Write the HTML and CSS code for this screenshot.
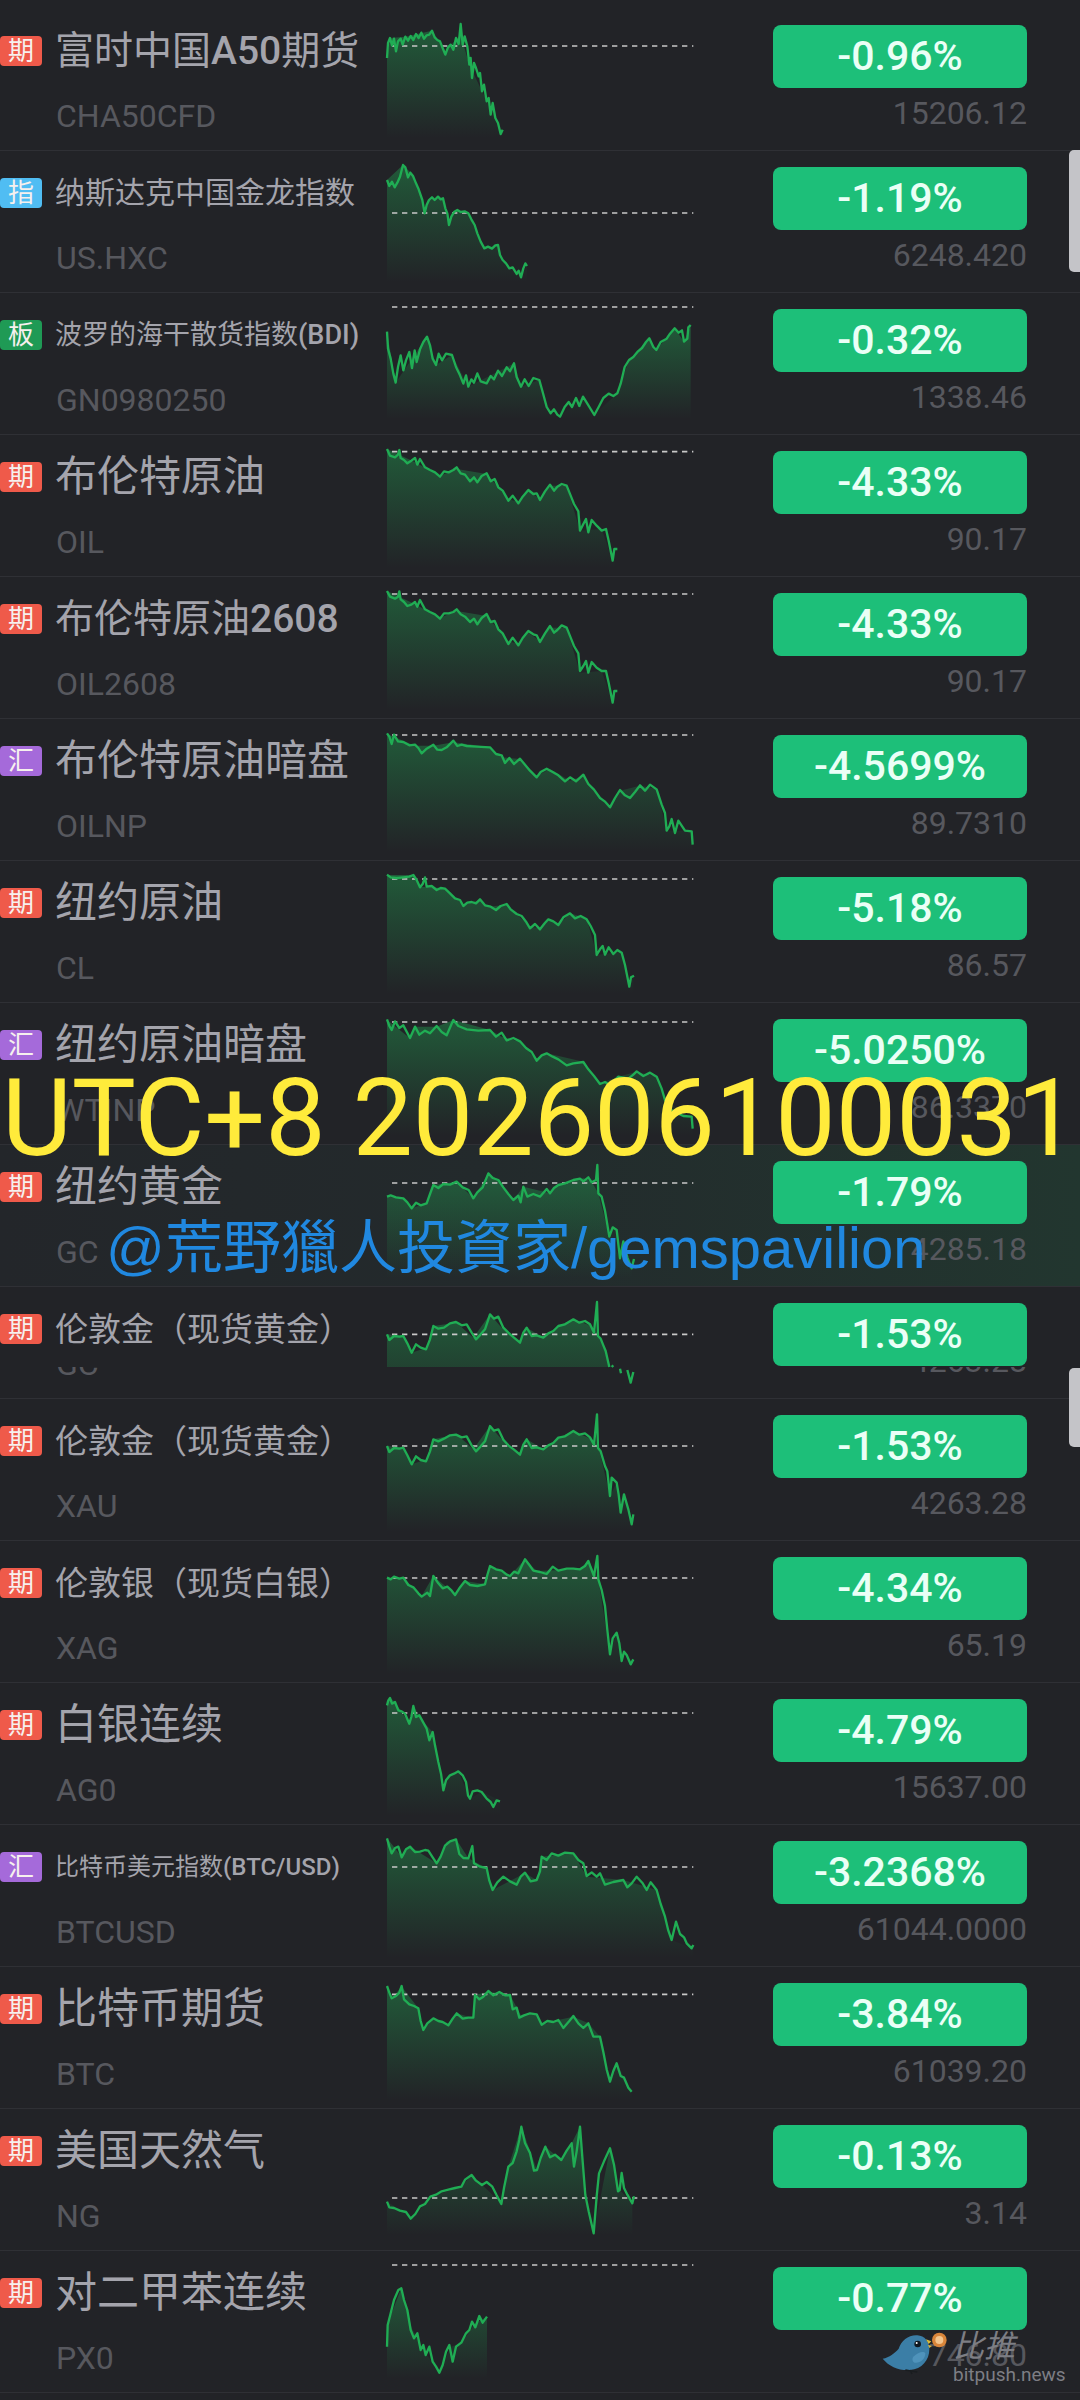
FILE: index.html
```html
<!DOCTYPE html>
<html lang="zh-CN">

<head>
    <meta charset="UTF-8">
    <meta name="viewport" content="width=device-width, initial-scale=1.0">
    <title>行情列表</title>
    <link rel="stylesheet" href="styles.css">
</head>

<body>
    <svg class="defs" aria-hidden="true">
        <defs>
            <linearGradient id="fade" x1="0" y1="0" x2="0" y2="1">
                <stop offset="0" stop-color="#20a552" stop-opacity="0.42" />
                <stop offset="1" stop-color="#20a552" stop-opacity="0" />
            </linearGradient>
            <linearGradient id="cutfade" x1="0" y1="0" x2="0" y2="1">
                <stop offset="0" stop-color="#20a552" stop-opacity="0.42" />
                <stop offset="1" stop-color="#20a552" stop-opacity="0.24" />
            </linearGradient>
        </defs>
    </svg>

    <div class="list">
        <div class="row">
            <div class="info">
                <div class="head"><span class="tag tag-red">期</span><span class="name name-l">富时中国<b>A50</b>期货</span></div>
                <div class="sym">CHA50CFD</div>
            </div>
            <svg class="chart" viewBox="51 0 930 426">
                <polygon fill="url(#fade)" points="51,150 60,90 106,86 186,68 226,130 272,80 298,170 336,250 398,370 398,390 51,390" />
                <line class="base" x1="66" y1="114" x2="970" y2="114" />
                <polyline class="spark" points="51,150 54,105 60,90 66,112 72,92 78,130 84,100 92,92 98,110 106,86 114,98 122,84 130,96 138,78 146,90 154,74 162,92 170,82 178,80 186,68 194,88 202,96 210,100 218,120 226,140 234,118 242,110 250,125 258,90 266,108 272,48 278,110 284,85 292,115 298,170 302,150 306,210 312,165 318,180 326,205 330,195 336,250 342,230 350,280 356,270 362,320 368,285 376,330 384,345 392,378 398,365" />
            </svg>
            <div class="quote">
                <div class="pct">-0.96%</div>
                <div class="price">15206.12</div>
            </div>
        </div>

        <div class="row">
            <div class="info">
                <div class="head"><span class="tag tag-blue">指</span><span class="name name-s">纳斯达克中国金龙指数</span></div>
                <div class="sym">US.HXC</div>
            </div>
            <svg class="chart" viewBox="51 0 930 426">
                <polygon fill="url(#fade)" points="51,90 99,45 129,75 157,150 164,190 177,150 219,145 237,225 253,185 295,190 322,250 343,295 384,285 398,330 453,380 471,345 471,395 51,395" />
                <line class="base" x1="66" y1="189" x2="970" y2="189" />
                <polyline class="spark" points="51,90 58,108 66,95 74,112 82,98 90,80 99,45 106,52 114,82 121,68 129,78 138,100 146,118 157,150 164,190 170,165 177,150 186,142 194,150 204,140 212,148 219,145 226,175 232,190 237,225 244,200 253,185 262,180 272,186 284,184 295,190 304,208 314,225 322,250 332,275 343,295 354,290 366,296 376,286 384,285 390,315 398,330 408,340 418,355 428,352 440,372 446,362 453,382 460,355 466,340 471,348" />
            </svg>
            <div class="quote">
                <div class="pct">-1.19%</div>
                <div class="price">6248.420</div>
            </div>
        </div>

        <div class="row">
            <div class="info">
                <div class="head"><span class="tag tag-green">板</span><span class="name name-xs">波罗的海干散货指数<b>(BDI)</b></span></div>
                <div class="sym">GN0980250</div>
            </div>
            <svg class="chart" viewBox="51 0 930 426">
                <polygon fill="url(#fade)" points="51,119 77,272 171,134 198,219 246,189 295,284 432,214 453,284 508,264 542,364 570,374 639,314 673,369 742,304 777,204 838,139 859,174 914,109 942,149 962,99 962,380 51,380" />
                <line class="base" x1="66" y1="45" x2="970" y2="45" />
                <polyline class="spark" points="51,119 54,170 62,200 70,245 77,272 84,225 92,190 100,235 108,205 118,180 126,228 134,175 140,210 150,172 160,150 171,134 180,160 188,200 198,219 206,185 216,205 228,185 246,189 258,225 270,250 280,275 288,250 295,284 304,262 312,272 322,244 332,268 350,274 362,252 372,262 384,236 396,252 410,226 420,238 432,214 440,255 453,284 464,262 476,282 490,258 508,264 518,300 530,345 542,364 552,352 562,368 570,374 584,345 596,330 606,345 618,318 628,342 639,314 652,335 673,369 686,345 700,318 716,305 730,312 742,304 752,275 764,225 777,204 790,195 804,178 816,168 828,150 838,139 850,165 859,174 872,150 890,140 900,125 914,109 926,122 936,115 942,149 952,140 955,106 962,99" />
            </svg>
            <div class="quote">
                <div class="pct">-0.32%</div>
                <div class="price">1338.46</div>
            </div>
        </div>

        <div class="row">
            <div class="info">
                <div class="head"><span class="tag tag-red">期</span><span class="name">布伦特原油</span></div>
                <div class="sym">OIL</div>
            </div>
            <svg class="chart" viewBox="51 0 930 426">
                <polygon fill="url(#fade)" points="51,45 135,85 210,125 260,105 350,120 415,195 445,205 475,170 510,195 540,155 590,155 630,290 695,285 728,380 735,345 735,400 51,400" />
                <line class="base" x1="66" y1="53" x2="970" y2="53" />
                <polyline class="spark" points="51,45 60,65 75,70 84,62 88,48 92,72 102,78 112,88 124,80 135,72 142,92 150,75 165,100 180,108 195,115 210,128 222,112 236,115 250,108 260,100 272,118 285,122 300,142 312,130 322,145 335,126 350,118 362,142 374,135 385,160 398,170 415,200 428,185 445,208 458,188 475,168 490,180 500,178 510,198 525,172 540,152 552,170 562,158 575,150 590,155 602,185 612,210 625,232 630,290 640,270 648,255 655,295 665,258 680,275 695,290 708,285 716,320 728,380 733,345 742,345" />
            </svg>
            <div class="quote">
                <div class="pct">-4.33%</div>
                <div class="price">90.17</div>
            </div>
        </div>

        <div class="row">
            <div class="info">
                <div class="head"><span class="tag tag-red">期</span><span class="name name-l">布伦特原油<b>2608</b></span></div>
                <div class="sym">OIL2608</div>
            </div>
            <svg class="chart" viewBox="51 0 930 426">
                <polygon fill="url(#fade)" points="51,45 135,85 210,125 260,105 350,120 415,195 445,205 475,170 510,195 540,155 590,155 630,290 695,285 728,380 735,345 735,400 51,400" />
                <line class="base" x1="66" y1="54" x2="970" y2="54" />
                <polyline class="spark" points="51,45 60,62 75,68 84,62 88,46 92,70 102,78 112,90 124,86 135,78 142,92 150,72 165,100 180,108 195,115 210,128 222,112 236,112 250,108 260,100 272,115 285,122 300,138 312,128 322,145 335,126 350,114 362,138 374,135 385,160 398,172 415,204 428,185 445,208 458,186 475,165 490,175 500,178 510,198 525,172 540,150 552,170 562,162 575,148 590,155 602,185 612,210 625,232 630,285 640,270 648,255 655,290 665,258 680,275 695,285 708,285 716,320 728,380 733,345 742,345" />
            </svg>
            <div class="quote">
                <div class="pct">-4.33%</div>
                <div class="price">90.17</div>
            </div>
        </div>

        <div class="row">
            <div class="info">
                <div class="head"><span class="tag tag-purple">汇</span><span class="name">布伦特原油暗盘</span></div>
                <div class="sym">OILNP</div>
            </div>
            <svg class="chart" viewBox="51 0 930 426">
                <polygon fill="url(#fade)" points="51,48 135,83 190,83 250,73 360,88 395,118 450,123 500,173 540,153 600,188 640,173 690,238 720,263 750,218 810,203 860,213 890,338 968,340 968,400 51,400" />
                <line class="base" x1="66" y1="51" x2="970" y2="51" />
                <polyline class="spark" points="51,46 58,56 65,78 72,50 84,70 100,72 118,82 135,80 145,90 155,106 170,92 190,80 202,95 215,96 230,88 250,68 262,84 275,80 290,84 320,86 360,88 378,108 395,112 405,135 418,120 432,138 450,122 465,140 480,158 500,178 512,162 530,152 548,162 565,172 585,190 600,178 618,190 640,170 655,198 672,215 690,240 704,250 720,268 735,240 750,216 765,232 780,240 795,222 810,202 825,218 840,200 860,214 875,260 885,285 890,338 898,325 905,303 915,345 925,308 945,338 965,340 968,380" />
            </svg>
            <div class="quote">
                <div class="pct">-4.5699%</div>
                <div class="price">89.7310</div>
            </div>
        </div>

        <div class="row">
            <div class="info">
                <div class="head"><span class="tag tag-red">期</span><span class="name">纽约原油</span></div>
                <div class="sym">CL</div>
            </div>
            <svg class="chart" viewBox="51 0 930 426">
                <polygon fill="url(#fade)" points="51,45 130,45 150,80 225,85 280,135 330,120 350,140 410,135 480,200 510,205 535,180 565,195 600,160 650,175 680,285 755,275 778,380 790,345 790,400 51,400" />
                <line class="base" x1="66" y1="57" x2="970" y2="57" />
                <polyline class="spark" points="51,44 62,52 80,54 100,52 118,50 130,45 140,60 150,82 158,72 165,52 170,80 185,78 200,90 212,84 225,86 240,100 255,115 270,120 280,138 292,128 305,126 318,130 330,118 345,136 362,140 378,150 392,138 410,132 422,148 440,162 455,168 468,185 480,205 495,192 510,208 524,190 535,178 550,184 565,195 580,172 600,160 615,175 632,168 650,178 662,198 675,225 680,285 690,268 698,258 705,284 716,262 730,282 742,270 755,278 765,315 778,380 783,352 792,347" />
            </svg>
            <div class="quote">
                <div class="pct">-5.18%</div>
                <div class="price">86.57</div>
            </div>
        </div>

        <div class="row">
            <div class="info">
                <div class="head"><span class="tag tag-purple">汇</span><span class="name">纽约原油暗盘</span></div>
                <div class="sym">WTINP</div>
            </div>
            <svg class="chart" viewBox="51 0 930 426">
                <polygon fill="url(#fade)" points="51,54 120,109 135,74 200,74 250,54 360,84 395,104 450,119 500,174 530,154 640,179 690,244 745,224 800,209 860,224 885,294 968,350 968,400 51,400" />
                <line class="base" x1="66" y1="60" x2="970" y2="60" />
                <polyline class="spark" points="51,52 58,72 65,84 75,58 88,78 100,70 120,108 135,74 148,98 165,86 180,94 200,72 215,90 230,100 250,54 265,72 290,82 325,86 360,84 378,104 395,92 410,115 430,108 450,118 468,138 485,150 500,176 515,160 530,154 548,164 565,172 590,190 610,184 640,180 655,202 672,222 690,246 705,240 720,250 745,224 775,230 790,218 800,208 820,222 840,212 860,224 875,260 885,294 905,325 940,342 965,344 968,380" />
            </svg>
            <div class="quote">
                <div class="pct">-5.0250%</div>
                <div class="price">86.3370</div>
            </div>
        </div>

        <div class="row row-tint">
            <div class="info">
                <div class="head"><span class="tag tag-red">期</span><span class="name">纽约黄金</span></div>
                <div class="sym">GC</div>
            </div>
            <svg class="chart" viewBox="51 0 930 426">
                <polygon fill="url(#fade)" points="51,158 100,163 125,193 170,178 190,123 260,113 310,163 355,88 385,108 430,168 460,128 540,148 565,123 640,103 665,113 685,148 718,278 750,343 785,373 785,400 51,400" />
                <line class="base" x1="66" y1="117" x2="970" y2="117" />
                <polyline class="spark" points="51,158 62,154 78,160 100,163 112,175 125,193 138,176 152,184 170,178 180,150 190,123 205,132 220,120 240,122 260,113 278,130 296,138 310,163 322,145 338,130 355,88 368,102 385,108 400,130 415,150 430,168 445,155 452,175 460,128 472,158 490,150 510,158 530,135 540,148 552,132 565,123 585,118 610,108 630,104 640,112 655,100 665,115 678,108 682,63 685,148 695,158 705,200 718,278 728,250 740,258 750,343 760,292 772,340 785,373 792,345" />
            </svg>
            <div class="quote">
                <div class="pct">-1.79%</div>
                <div class="price">4285.18</div>
            </div>
        </div>

        <div class="row row-cut">
            <div class="info">
                <div class="head"><span class="tag tag-red">期</span><span class="name name-m">伦敦金（现货黄金）</span></div>
                <div class="sym sym-cut"><div class="sym-inner">GC</div></div>
            </div>
            <svg class="chart" viewBox="51 0 930 336">
                <polygon fill="url(#cutfade)" points="51,145 100,150 125,200 170,185 190,120 260,110 310,155 360,85 395,125 450,170 470,125 520,155 565,120 610,100 665,120 685,145 705,195 716,243 51,243" />
                <line class="base" x1="66" y1="145" x2="970" y2="145" />
                <polyline class="spark" points="51,145 58,162 72,150 88,152 100,150 112,172 125,200 138,175 152,185 168,190 180,160 190,120 205,128 222,125 240,112 258,108 275,118 290,115 305,140 318,160 332,145 345,130 360,85 372,98 385,92 400,125 415,140 432,155 450,170 460,140 470,125 485,150 500,148 520,155 535,142 550,135 565,120 585,115 610,100 628,110 645,105 660,115 672,140 681,48 684,150 692,158 700,178 707,195 718,243" />
                <polyline class="spark" points="725,243 730,238" />
                <polyline class="spark" points="750,248 753,262" />
                <polyline class="spark" points="772,252 782,290 790,258" />
            </svg>
            <div class="quote">
                <div class="pct">-1.53%</div>
                <div class="price price-cut"><div class="price-inner">4263.28</div></div>
            </div>
        </div>

        <div class="row">
            <div class="info">
                <div class="head"><span class="tag tag-red">期</span><span class="name name-m">伦敦金（现货黄金）</span></div>
                <div class="sym">XAU</div>
            </div>
            <svg class="chart" viewBox="51 0 930 426">
                <polygon fill="url(#fade)" points="51,144 100,149 125,199 170,184 190,124 260,109 310,154 360,84 395,124 450,169 470,124 520,154 565,119 610,99 665,124 685,144 720,294 740,254 752,344 762,289 785,379 790,349 790,400 51,400" />
                <line class="base" x1="66" y1="144" x2="970" y2="144" />
                <polyline class="spark" points="51,144 58,162 72,150 88,152 100,149 112,172 125,199 138,175 152,186 168,190 180,160 190,124 205,130 222,122 240,112 258,110 275,118 290,115 305,142 318,160 332,145 345,130 360,84 372,98 385,94 400,125 415,142 432,155 450,170 460,140 470,124 485,150 500,148 520,154 535,142 550,135 565,119 585,115 610,99 628,110 645,106 660,118 672,140 681,49 684,150 692,160 705,204 712,220 720,294 725,239 740,254 746,290 752,344 762,289 775,334 785,379 790,349" />
            </svg>
            <div class="quote">
                <div class="pct">-1.53%</div>
                <div class="price">4263.28</div>
            </div>
        </div>

        <div class="row">
            <div class="info">
                <div class="head"><span class="tag tag-red">期</span><span class="name name-m">伦敦银（现货白银）</span></div>
                <div class="sym">XAG</div>
            </div>
            <svg class="chart" viewBox="51 0 930 426">
                <polygon fill="url(#fade)" points="51,113 100,113 155,168 190,108 255,163 285,123 345,133 360,78 420,108 465,58 500,93 630,88 655,63 685,118 720,343 740,278 755,363 790,358 790,400 51,400" />
                <line class="base" x1="66" y1="114" x2="970" y2="114" />
                <polyline class="spark" points="51,113 62,118 72,110 88,116 100,113 115,135 130,142 145,160 155,170 172,158 180,168 190,108 205,130 218,145 232,140 245,152 255,165 268,145 285,123 300,135 322,138 345,133 352,105 360,78 378,88 395,92 410,104 420,108 432,95 445,100 455,78 465,58 478,75 490,92 510,96 530,102 548,80 565,92 590,86 610,86 630,88 645,78 655,63 665,90 672,108 682,48 685,118 695,150 705,198 712,270 720,343 728,295 740,278 748,310 755,363 762,335 770,345 782,373 790,358" />
            </svg>
            <div class="quote">
                <div class="pct">-4.34%</div>
                <div class="price">65.19</div>
            </div>
        </div>

        <div class="row">
            <div class="info">
                <div class="head"><span class="tag tag-red">期</span><span class="name">白银连续</span></div>
                <div class="sym">AG0</div>
            </div>
            <svg class="chart" viewBox="51 0 930 426">
                <polygon fill="url(#fade)" points="51,70 60,48 75,60 118,125 130,72 160,120 188,150 220,325 240,280 265,268 300,350 335,330 390,355 390,400 51,400" />
                <line class="base" x1="66" y1="93" x2="970" y2="93" />
                <polyline class="spark" points="51,70 55,55 60,48 66,65 75,60 85,85 95,88 105,95 118,125 124,105 130,72 138,105 148,100 160,122 170,140 178,175 188,150 195,190 205,240 213,275 220,325 228,295 240,280 252,275 265,268 278,280 288,300 294,340 300,350 308,328 322,325 335,330 350,350 362,360 370,375 380,355 390,358" />
            </svg>
            <div class="quote">
                <div class="pct">-4.79%</div>
                <div class="price">15637.00</div>
            </div>
        </div>

        <div class="row">
            <div class="info">
                <div class="head"><span class="tag tag-purple">汇</span><span class="name name-xxs">比特币美元指数<b>(BTC/USD)</b></span></div>
                <div class="sym">BTCUSD</div>
            </div>
            <svg class="chart" viewBox="51 0 930 426">
                <polygon fill="url(#fade)" points="51,43 95,98 120,68 200,118 230,53 260,48 295,103 350,133 368,198 465,148 500,168 515,98 610,88 650,158 760,168 860,198 905,348 965,373 970,363 970,400 51,400" />
                <line class="base" x1="66" y1="129" x2="970" y2="129" />
                <polyline class="spark" points="51,43 58,68 65,88 75,72 85,68 95,100 108,76 120,68 135,84 150,83 165,78 175,80 188,100 200,118 212,98 225,65 240,52 258,46 268,90 280,102 295,103 307,66 312,118 330,128 350,132 358,170 368,198 382,175 400,158 420,172 440,182 452,158 465,146 482,172 500,168 510,142 515,98 530,108 545,88 565,95 585,86 610,88 625,108 640,118 650,156 665,145 680,158 690,148 705,182 730,174 760,168 772,190 785,178 800,158 818,178 830,198 842,175 860,198 872,240 885,278 895,320 905,348 918,293 930,330 942,340 950,358 965,373 970,363" />
            </svg>
            <div class="quote">
                <div class="pct">-3.2368%</div>
                <div class="price">61044.0000</div>
            </div>
        </div>

        <div class="row">
            <div class="info">
                <div class="head"><span class="tag tag-red">期</span><span class="name">比特币期货</span></div>
                <div class="sym">BTC</div>
            </div>
            <svg class="chart" viewBox="51 0 930 426">
                <polygon fill="url(#fade)" points="51,62 65,97 95,62 145,127 160,192 190,157 235,177 260,142 310,157 315,87 355,77 420,87 455,152 500,142 515,177 565,162 610,152 655,172 690,212 720,347 740,292 785,377 785,400 51,400" />
                <line class="base" x1="66" y1="85" x2="970" y2="85" />
                <polyline class="spark" points="51,60 58,80 65,97 78,90 88,80 95,60 102,100 118,115 132,120 145,127 152,165 160,192 172,172 190,157 205,165 218,168 235,178 248,158 260,142 278,158 295,155 310,155 315,87 328,100 340,92 355,75 370,88 388,78 405,88 420,87 428,130 440,125 448,155 462,148 480,142 500,145 515,176 532,165 550,168 565,162 580,186 598,165 610,150 625,172 640,186 655,172 670,212 690,212 700,258 710,310 720,347 730,315 740,292 752,330 762,335 775,365 785,377" />
            </svg>
            <div class="quote">
                <div class="pct">-3.84%</div>
                <div class="price">61039.20</div>
            </div>
        </div>

        <div class="row">
            <div class="info">
                <div class="head"><span class="tag tag-red">期</span><span class="name">美国天然气</span></div>
                <div class="sym">NG</div>
            </div>
            <svg class="chart" viewBox="51 0 930 426">
                <polygon fill="url(#fade)" points="51,281 130,331 181,266 274,236 305,201 394,286 415,176 454,56 501,186 526,116 574,156 605,106 630,56 646,261 671,376 720,121 749,246 787,286 787,380 51,380" />
                <line class="base" x1="66" y1="270" x2="970" y2="270" />
                <polyline class="spark" points="51,281 58,298 72,300 90,308 108,312 122,332 136,318 150,295 165,288 181,266 198,260 215,250 235,245 255,240 274,236 285,215 305,201 318,218 336,231 350,222 367,236 380,262 394,288 402,240 415,176 428,165 440,130 448,95 454,56 465,105 480,135 492,188 501,186 512,150 526,116 540,148 555,140 574,156 590,128 605,106 612,176 620,130 630,56 638,160 646,261 656,310 671,376 680,265 687,196 702,160 720,121 732,170 744,250 749,246 755,195 762,240 772,260 787,286 792,265" />
            </svg>
            <div class="quote">
                <div class="pct">-0.13%</div>
                <div class="price">3.14</div>
            </div>
        </div>

        <div class="row">
            <div class="info">
                <div class="head"><span class="tag tag-red">期</span><span class="name">对二甲苯连续</span></div>
                <div class="sym">PX0</div>
            </div>
            <svg class="chart" viewBox="51 0 930 426">
                <polygon fill="url(#fade)" points="51,225 94,115 125,235 167,310 208,365 243,290 274,280 316,220 351,200 351,385 51,385" />
                <line class="base" x1="66" y1="45" x2="970" y2="45" />
                <polyline class="spark" points="51,290 53,225 62,190 72,150 85,120 94,115 102,150 112,180 122,240 132,265 142,250 152,300 160,285 167,315 178,290 188,335 198,350 208,368 218,345 228,305 238,285 248,335 258,290 274,278 288,250 298,240 306,215 316,232 328,198 338,218 351,200" />
            </svg>
            <div class="quote">
                <div class="pct">-0.77%</div>
                <div class="price">746.80</div>
            </div>
        </div>
    </div>

    <div class="scroll-thumb thumb-a"></div>
    <div class="scroll-thumb thumb-b"></div>

    <div class="stamp-time">UTC+8 202606100031</div>
    <div class="stamp-author">@荒野獵人投資家/gemspavilion</div>

    <div class="mark">
        <svg class="mark-bird" viewBox="60 90 210 135">
            <path fill="#3b7ea6" d="M68 176 C88 172 104 160 116 146 C124 122 146 104 172 106 C194 108 208 124 208 148 C208 180 186 208 150 210 C116 212 88 200 68 176 Z" />
            <path fill="#4f93bb" d="M160 170 C174 156 192 152 196 160 C196 178 180 190 164 188 C156 184 156 176 160 170 Z" />
            <circle cx="173" cy="132" r="10" fill="#10181f" />
            <circle cx="170" cy="129" r="3" fill="#ffffff" />
            <path fill="#d8b93c" d="M198 118 L214 124 L206 132 Z M204 134 L216 138 L208 144 Z" />
            <circle cx="238" cy="120" r="22" fill="#d9853a" />
            <circle cx="238" cy="120" r="12" fill="#f2c48d" />
            <path stroke="#1a1d20" stroke-width="5" fill="none" d="M150 210 L156 222 M136 210 L172 216" />
        </svg>
        <div class="mark-text">
            <div class="mark-cn">比推</div>
            <div class="mark-en">bitpush.news</div>
        </div>
    </div>
</body>

</html>
```

FILE: styles.css
```css
html,
body {
    margin: 0;
    padding: 0;
    height: 2400px;
    overflow: hidden;
    background-color: #222327;
}

body {
    position: relative;
    font-family: Roboto, "Noto Sans CJK SC", sans-serif;
}

.defs {
    position: absolute;
    width: 0;
    height: 0;
}

.list {
    padding-top: 8px;
    border-bottom: 1px solid #2f3035;
}

.row {
    display: flex;
    height: 142px;
    box-sizing: border-box;
}

/* hairline sits on the row's top edge so it takes no height */
.row + .row {
    box-shadow: inset 0 1px 0 #2f3035;
}

.row-cut {
    height: 112px;
}

.row-tint {
    background: linear-gradient(90deg, #23262a 0%, #232a2c 45%, #22362f 100%);
}

.info {
    width: 387px;
    flex-shrink: 0;
}

.head {
    display: flex;
    align-items: center;
    gap: 13px;
    height: 30px;
    margin-top: 28px;
    white-space: nowrap;
}

.tag {
    width: 42px;
    height: 30px;
    line-height: 30px;
    text-align: center;
    border-radius: 4px;
    font-size: 26px;
    color: #f6f0ee;
    flex-shrink: 0;
}

.tag-red {
    background-color: #ef5a4a;
}

.tag-blue {
    background-color: #50bdf3;
}

.tag-green {
    background-color: #1f9a55;
}

.tag-purple {
    background-color: #a56ada;
}

.name {
    font-size: 42px;
    color: #a4a4ac;
    line-height: 1;
}

.name b {
    font-weight: 500;
}

.name-l {
    font-size: 39px;
}

.name-m {
    font-size: 33px;
}

.name-s {
    font-size: 30px;
}

.name-xs {
    font-size: 27px;
}

.name-xxs {
    font-size: 24px;
}

.sym {
    margin: 30px 0 0 56px;
    line-height: 40px;
    font-size: 32px;
    color: #57585e;
}

.sym-cut {
    height: 9px;
    margin-top: 23px;
    overflow: hidden;
}

.sym-inner {
    margin-top: -23px;
}

.chart {
    display: block;
    width: 310px;
    height: 142px;
    flex-shrink: 0;
    overflow: visible;
}

.row-cut .chart {
    height: 112px;
}

.base {
    stroke: #c8c8c8;
    stroke-width: 5;
    stroke-dasharray: 16 14;
}

.spark {
    fill: none;
    stroke: #20ad54;
    stroke-width: 7;
    stroke-linejoin: round;
}

.quote {
    width: 254px;
    margin-left: 76px;
    padding-top: 17px;
}

.pct {
    height: 63px;
    line-height: 63px;
    text-align: center;
    border-radius: 8px;
    background-color: #1dbf79;
    color: #eafff6;
    font-size: 41px;
    font-weight: 500;
}

.price {
    margin-top: 5px;
    line-height: 40px;
    text-align: right;
    font-size: 32px;
    color: #57585e;
}

.price-cut {
    height: 6px;
    margin-top: 1px;
    overflow: hidden;
}

.price-inner {
    margin-top: -26px;
}

.scroll-thumb {
    position: absolute;
    right: 0;
    width: 11px;
    background-color: #c4c4c8;
    border-radius: 5px 0 0 5px;
}

.thumb-a {
    top: 150px;
    height: 122px;
}

.thumb-b {
    top: 1368px;
    height: 79px;
}

.stamp-time {
    position: absolute;
    left: 2px;
    top: 1058px;
    font-family: Roboto, "Liberation Sans", sans-serif;
    font-size: 107.5px;
    line-height: 120px;
    color: #ffeb3b;
    white-space: nowrap;
}

.stamp-author {
    position: absolute;
    left: 106px;
    top: 1208px;
    font-family: "Liberation Sans", "Noto Sans CJK TC", sans-serif;
    font-size: 58px;
    line-height: 80px;
    color: #2088e0;
    white-space: nowrap;
}

.mark {
    position: absolute;
    left: 880px;
    top: 2330px;
    display: flex;
}

.mark-bird {
    width: 70px;
    height: 45px;
}

.mark-text {
    margin-left: 3px;
    color: #7d7e84;
}

.mark-cn {
    font-size: 31px;
    line-height: 34px;
    font-style: italic;
}

.mark-en {
    font-size: 19px;
    line-height: 22px;
}
```
